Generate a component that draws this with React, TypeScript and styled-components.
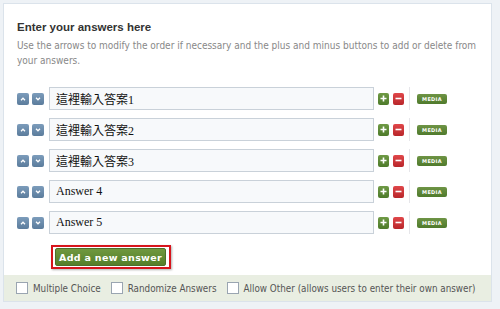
import React from "react";
import styled, { createGlobalStyle } from "styled-components";

const Global = createGlobalStyle`
  html, body { margin: 0; padding: 0; background: #eef2f6; }
  body { width: 500px; height: 309px; overflow: hidden; }
`;

const Page = styled.div`
  box-sizing: border-box;
  width: 500px;
  padding: 3px 8px 6px 3px;
  font-family: "DejaVu Sans Condensed", "DejaVu Sans", sans-serif;
`;

const Panel = styled.div`
  background: #fff;
  border: 1px solid #dbe3eb;
  display: flex;
  flex-direction: column;
`;

const Body = styled.div`
  padding: 15px 13px 6px 13px;
`;

const Title = styled.h2`
  margin: 0;
  font-family: "Liberation Sans", Arial, sans-serif;
  font-size: 11.5px;
  font-weight: bold;
  color: #333;
  line-height: 16px;
`;

const Hint = styled.p`
  margin: 3px 0 0;
  font-size: 10px;
  line-height: 15px;
  color: #888;
`;

const List = styled.div`
  display: flex;
  flex-direction: column;
  gap: 8px;
  margin-top: 19px;
`;

const Row = styled.div`
  display: flex;
  align-items: center;
  height: 23px;
`;

const ArrowBtn = styled.button`
  width: 12px;
  height: 12px;
  padding: 0;
  border: none;
  border-radius: 2px;
  background: linear-gradient(#7c9cbb, #5b7c9c);
  display: flex;
  align-items: center;
  justify-content: center;
  margin-right: 3px;
`;

const Input = styled.input`
  box-sizing: border-box;
  width: 325px;
  height: 23px;
  margin-left: 2px;
  border: 1px solid #c9d1d9;
  background: #f7f9fb;
  padding: 0 6px;
  font-family: "Liberation Serif", "Noto Sans CJK TC", serif;
  font-size: 12px;
  color: #111;
  outline: none;
`;

const SmallBtn = styled.button<{ $tone: "plus" | "minus" }>`
  width: 11px;
  height: 12px;
  padding: 0;
  border: none;
  border-radius: 2px;
  background: ${(p) => (p.$tone === "plus" ? "linear-gradient(#6f9a45,#4d7a2a)" : "linear-gradient(#e0474a,#b8262a)")};
  color: #fff;
  display: flex;
  align-items: center;
  justify-content: center;
  margin-left: 4px;
`;

const Sep = styled.div`
  width: 1px;
  height: 23px;
  background: #e6e6ea;
  margin: 0 7px 0 5px;
`;

const Media = styled.button`
  height: 10px;
  width: 30px;
  padding: 0;
  border: none;
  border-radius: 2px;
  background: linear-gradient(#6e9445, #4f7a2c);
  color: #fff;
  font-family: "DejaVu Sans", sans-serif;
  font-size: 5px;
  font-weight: bold;
  letter-spacing: 0.3px;
  line-height: 10px;
`;

const AddWrap = styled.div`
  margin: 11px 0 0 34px;
  display: inline-block;
  border: 2px solid #d7141c;
  padding: 1px 3px 1px 2px;
  box-shadow: 1px 1px 2px rgba(0,0,0,0.3);
`;

const AddBtn = styled.button`
  display: block;
  height: 18px;
  width: 111px;
  padding: 0;
  border: 1px solid #4d6e2b;
  border-radius: 2px;
  background: linear-gradient(#6f983f, #557f2a);
  color: #fff;
  font-family: "DejaVu Sans", sans-serif;
  font-size: 9.5px;
  font-weight: bold;
  letter-spacing: 0.3px;
  white-space: nowrap;
`;

const Footer = styled.div`
  background: #e9eee2;
  height: 26px;
  display: flex;
  align-items: center;
  padding-left: 12px;
  font-size: 9.8px;
  color: #555;
  white-space: nowrap;
`;

const Check = styled.label`
  display: flex;
  align-items: center;
  gap: 5px;
  margin-right: 10px;
`;

const Box = styled.span`
  width: 10px;
  height: 10px;
  border: 1px solid #9aa5b1;
  background: #fff;
  display: inline-block;
`;

const Up = () => (
  <svg width="6" height="4" viewBox="0 0 6 4"><path d="M1 3.2 L3 1.2 L5 3.2" stroke="#fff" strokeWidth="1.3" fill="none" /></svg>
);
const Down = () => (
  <svg width="6" height="4" viewBox="0 0 6 4"><path d="M1 0.8 L3 2.8 L5 0.8" stroke="#fff" strokeWidth="1.3" fill="none" /></svg>
);

const answers = ["這裡輸入答案1", "這裡輸入答案2", "這裡輸入答案3", "Answer 4", "Answer 5"];

export default function App() {
  return (
    <>
      <Global />
      <Page>
        <Panel>
          <Body>
            <Title>Enter your answers here</Title>
            <Hint>
              Use the arrows to modify the order if necessary and the plus and minus buttons to add or delete from your answers.
            </Hint>
            <List>
              {answers.map((a) => (
                <Row key={a}>
                  <ArrowBtn><Up /></ArrowBtn>
                  <ArrowBtn><Down /></ArrowBtn>
                  <Input defaultValue={a} />
                  <SmallBtn $tone="plus">
                    <svg width="7" height="7" viewBox="0 0 7 7"><path d="M3.5 0.5V6.5M0.5 3.5H6.5" stroke="#fff" strokeWidth="1.6" /></svg>
                  </SmallBtn>
                  <SmallBtn $tone="minus">
                    <svg width="7" height="7" viewBox="0 0 7 7"><path d="M0.5 3.5H6.5" stroke="#fff" strokeWidth="1.6" /></svg>
                  </SmallBtn>
                  <Sep />
                  <Media>MEDIA</Media>
                </Row>
              ))}
            </List>
            <AddWrap>
              <AddBtn>Add a new answer</AddBtn>
            </AddWrap>
          </Body>
          <Footer>
            <Check><Box />Multiple Choice</Check>
            <Check><Box />Randomize Answers</Check>
            <Check><Box />Allow Other (allows users to enter their own answer)</Check>
          </Footer>
        </Panel>
      </Page>
    </>
  );
}
